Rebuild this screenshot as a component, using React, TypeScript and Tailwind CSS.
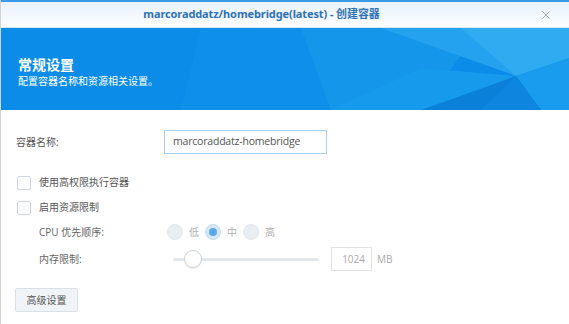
import { X } from "lucide-react";

const cjk = "font-['Noto_Sans','Noto_Sans_CJK_SC',sans-serif]";

function Checkbox({ label }: { label: string }) {
  return (
    <label className="flex items-center gap-[8px]">
      <span className="w-[14px] h-[14px] border border-[#cfd6dd] rounded-[2px] bg-white" />
      <span className="text-[10px] text-[#555]">{label}</span>
    </label>
  );
}

function Radio({ label, checked }: { label: string; checked?: boolean }) {
  return (
    <div className="flex items-center gap-[6px]">
      <span
        className={
          "w-[16px] h-[16px] rounded-full flex items-center justify-center " +
          (checked ? "bg-[#d6e8f7] border border-[#c4dcf0]" : "bg-[#e9eef3] border border-[#e0e6ec]")
        }
      >
        {checked && <span className="w-[8px] h-[8px] rounded-full bg-[#5aa9e6]" />}
      </span>
      <span className="text-[10px] text-[#b0b0b0]">{label}</span>
    </div>
  );
}

export default function App() {
  return (
    <div className={`w-[569px] h-[324px] bg-white overflow-hidden border-l border-[#d2d2d2] ${cjk}`}>
      <div className="h-[2px] bg-[#3b9ae6]" />

      {/* Title bar */}
      <div className="h-[26px] flex items-center bg-gradient-to-b from-[#e9f2fb] to-[#fbfdff] border-b border-[#dbe6f0]">
        <div className="flex-1 flex justify-center pl-[2px]">
          <div className="text-[11px] font-bold text-[#2f72b5] tracking-[-0.1px]">
            marcoraddatz/homebridge(latest) - 创建容器
          </div>
        </div>
        <div className="w-[49px] flex justify-end pr-[16px]">
          <X className="w-[14px] h-[14px] text-[#9aa4ad]" strokeWidth={1.5} />
        </div>
      </div>

      {/* Banner */}
      <div className="relative h-[82px] bg-[#0a8ce8] overflow-hidden">
        <svg className="absolute inset-0" width="569" height="82" viewBox="0 0 569 82" preserveAspectRatio="none">
          <polygon points="200,0 420,0 330,82 180,82" fill="#0e90ea" />
          <polygon points="300,0 480,0 420,82 330,82" fill="#1496eb" />
          <polygon points="380,0 569,0 515,48" fill="#24a2ef" />
          <polygon points="460,0 569,0 569,30 515,48" fill="#2eabf1" />
          <polygon points="515,48 569,30 569,82 540,82" fill="#1a9cee" />
          <polygon points="420,82 515,48 480,82" fill="#0a80d8" />
          <polygon points="480,82 515,48 540,82" fill="#0c86de" />
          <polygon points="330,82 420,40 515,48 420,82" fill="#159aec" />
        </svg>
        <div className="relative pl-[17px] pt-[30px] text-white leading-none">
          <div className="text-[14px] font-bold">常规设置</div>
          <div className="text-[10px] mt-[4px]">配置容器名称和资源相关设置。</div>
        </div>
      </div>

      {/* Content */}
      <div className="pl-[15px] pt-[20px] text-[#555]">
        <div className="flex items-center h-[24px]">
          <div className="w-[148px] text-[10px]">容器名称:</div>
          <div className="w-[163px] h-[24px] border border-[#a9d0ec] flex items-center pl-[8px] text-[10.5px] tracking-[-0.2px] text-[#555] font-['Open_Sans',sans-serif]">
            marcoraddatz-homebridge
          </div>
        </div>

        <div className="mt-[21px] flex flex-col gap-[10px] pl-[1px]">
          <Checkbox label="使用高权限执行容器" />
          <Checkbox label="启用资源限制" />
        </div>

        <div className="pl-[23px]">
          <div className="flex items-center h-[18px] mt-[8px]">
            <div className="w-[128px] text-[10px] text-[#666]">
              <span className="font-['Open_Sans',sans-serif]">CPU</span> 优先顺序:
            </div>
            <div className="flex items-center gap-[6px]">
              <Radio label="低" />
              <Radio label="中" checked />
              <Radio label="高" />
            </div>
          </div>

          <div className="flex items-center h-[24px] mt-[6px]">
            <div className="w-[134px] text-[10px] text-[#666]">内存限制:</div>
            <div className="relative w-[146px] h-[18px] flex items-center">
              <div className="w-full h-[3px] rounded-full bg-[#e3e8ec]" />
              <div className="absolute left-[11px] w-[18px] h-[18px] rounded-full bg-white border border-[#cdd5dc] shadow-[0_1px_1px_rgba(0,0,0,0.08)]" />
            </div>
            <div className="ml-[12px] w-[41px] h-[24px] border border-[#e2e2e2] flex items-center justify-end pr-[6px] text-[10px] text-[#aaa] font-['Open_Sans',sans-serif]">
              1024
            </div>
            <div className="ml-[5px] text-[10px] text-[#aaa] font-['Open_Sans',sans-serif]">MB</div>
          </div>
        </div>

        <button className="mt-[17px] -ml-[1px] w-[63px] h-[24px] bg-[#f0f4f8] border border-[#d9e0e7] rounded-[2px] text-[10px] text-[#555]">
          高级设置
        </button>
      </div>
    </div>
  );
}
